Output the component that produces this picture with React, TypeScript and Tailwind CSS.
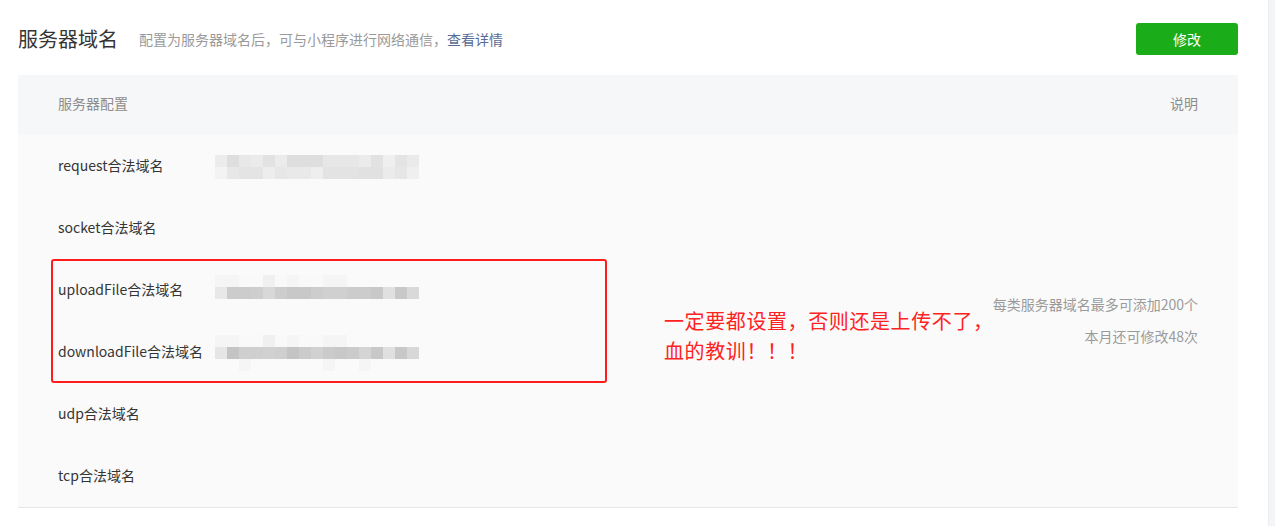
const rows = ['request合法域名', 'socket合法域名', 'uploadFile合法域名', 'downloadFile合法域名', 'udp合法域名', 'tcp合法域名'];

// mosaic blocks that hide the configured domains
const reqTop = ['bg-[#ececec]', 'bg-[#dedede]', 'bg-[#e8e8e8]', 'bg-[#ebebeb]', 'bg-[#e2e2e2]', 'bg-[#ebebeb]', 'bg-[#dedede]', 'bg-[#dedede]', 'bg-[#dedede]', 'bg-[#e7e7e7]', 'bg-[#e7e7e7]', 'bg-[#e7e7e7]', 'bg-[#ebebeb]', 'bg-[#e2e2e2]', 'bg-[#efefef]', 'bg-[#e4e4e4]', 'bg-[#eaeaea]'];
const reqBot = ['bg-[#f3f3f3]', 'bg-[#e7e7e7]', 'bg-[#e4e4e4]', 'bg-[#e4e4e4]', 'bg-[#ededed]', 'bg-[#e7e7e7]', 'bg-[#e9e9e9]', 'bg-[#e9e9e9]', 'bg-[#eeeeee]', 'bg-[#e3e3e3]', 'bg-[#e3e3e3]', 'bg-[#e3e3e3]', 'bg-[#e1e1e1]', 'bg-[#e1e1e1]', 'bg-[#ebebeb]', 'bg-[#e6e6e6]', 'bg-[#efefef]'];
const faint = ['bg-[#f5f5f5]', 'bg-[#f5f5f5]', 'bg-[#f9f9f9]', 'bg-[#f9f9f9]', 'bg-[#f0f0f0]', 'bg-[#f9f9f9]', 'bg-[#f5f5f5]', 'bg-[#f9f9f9]', 'bg-[#f9f9f9]', 'bg-[#f5f5f5]', 'bg-[#f5f5f5]', 'bg-[#fafafa]', 'bg-[#fafafa]', 'bg-[#fafafa]', 'bg-[#fafafa]', 'bg-[#fafafa]', 'bg-[#fafafa]'];
const upMain = ['bg-[#e8e8e8]', 'bg-[#cccccc]', 'bg-[#cccccc]', 'bg-[#cecece]', 'bg-[#d8d8d8]', 'bg-[#cdcdcd]', 'bg-[#c8c8c8]', 'bg-[#c8c8c8]', 'bg-[#cdcdcd]', 'bg-[#d0d0d0]', 'bg-[#d0d0d0]', 'bg-[#cccccc]', 'bg-[#cccccc]', 'bg-[#c8c8c8]', 'bg-[#e0e0e0]', 'bg-[#c8c8c8]', 'bg-[#d9d9d9]'];
const downMain = ['bg-[#e6e6e6]', 'bg-[#c4c4c4]', 'bg-[#cfcfcf]', 'bg-[#cfcfcf]', 'bg-[#d1d1d1]', 'bg-[#cfcfcf]', 'bg-[#c4c4c4]', 'bg-[#cbcbcb]', 'bg-[#d1d1d1]', 'bg-[#cbcbcb]', 'bg-[#c8c8c8]', 'bg-[#cbcbcb]', 'bg-[#d4d4d4]', 'bg-[#c8c8c8]', 'bg-[#e0e0e0]', 'bg-[#c8c8c8]', 'bg-[#d8d8d8]'];
const downBot = ['bg-[#fafafa]', 'bg-[#fafafa]', 'bg-[#f5f5f5]', 'bg-[#fafafa]', 'bg-[#fafafa]', 'bg-[#fafafa]', 'bg-[#fafafa]', 'bg-[#fafafa]', 'bg-[#fafafa]', 'bg-[#f5f5f5]', 'bg-[#fafafa]', 'bg-[#fafafa]', 'bg-[#f5f5f5]', 'bg-[#fafafa]', 'bg-[#fafafa]', 'bg-[#fafafa]', 'bg-[#fafafa]'];

function Strip({ cells }: { cells: string[] }) {
  return (
    <div className="flex">
      {cells.map((c, i) => (
        <div key={i} className={`w-3 h-3 ${c}`} />
      ))}
    </div>
  );
}

function Mosaic({ index }: { index: number }) {
  if (index === 0)
    return (
      <div className="flex flex-col pt-[20px]">
        <Strip cells={reqTop} />
        <Strip cells={reqBot} />
      </div>
    );
  if (index === 2)
    return (
      <div className="flex flex-col pt-[16px]">
        <Strip cells={faint} />
        <Strip cells={upMain} />
      </div>
    );
  if (index === 3)
    return (
      <div className="flex flex-col pt-[14px]">
        <Strip cells={faint} />
        <Strip cells={downMain} />
        <Strip cells={downBot} />
      </div>
    );
  return null;
}

export default function App() {
  return (
    <div
      className="flex w-[1275px] h-[526px] bg-white overflow-hidden"
      style={{ fontFamily: '"Noto Sans CJK SC", "Microsoft YaHei", sans-serif' }}
    >
      <div className="flex-1 pl-[18px] pr-[30px]">
        {/* Header */}
        <div className="flex items-center justify-between pt-[23px] h-[55px]">
          <div className="flex items-center">
            <h2 className="text-[20px] leading-[32px] text-[#353535]">服务器域名</h2>
            <p className="ml-[21px] text-[14px] text-[#9a9a9a]">
              配置为服务器域名后，可与小程序进行网络通信，
              <span className="text-[#576b95]">查看详情</span>
            </p>
          </div>
          <button className="w-[102px] h-[32px] rounded-[3px] bg-[#1aad19] text-white text-[14px]">
            修改
          </button>
        </div>

        {/* Table */}
        <div className="mt-[20px] border-b border-[#e7e7e7]">
          <div className="flex items-center justify-between h-[60px] pb-[3px] px-[40px] bg-[#f6f7f9] text-[14px] text-[#8d8d8d]">
            <span>服务器配置</span>
            <span>说明</span>
          </div>

          <div className="relative flex bg-[#fafafa]">
            <div className="flex flex-col">
              {rows.map((label, i) => (
                <div key={label} className="flex h-[62px] pl-[40px]">
                  <div className="w-[157px] flex items-center pb-[2px] text-[14px] text-[#353535]">{label}</div>
                  <div className="w-[204px]">
                    <Mosaic index={i} />
                  </div>
                </div>
              ))}
            </div>
            <div className="flex-1 flex flex-col items-end justify-center gap-[10px] pr-[40px] pb-[2px] text-[14px] leading-[22px] text-[#9a9a9a]">
              <span>每类服务器域名最多可添加200个</span>
              <span>本月还可修改48次</span>
            </div>

            {/* annotation */}
            <div className="absolute left-[33px] top-[124px] w-[556px] h-[124px] border-[2.5px] border-[#ff1c1c] rounded-[3px]" />
            <div className="absolute left-[646px] top-[171px] text-[20px] leading-[30px] tracking-[0.6px] text-[#ff2222]">
              <div>一定要都设置，否则还是上传不了，</div>
              <div>血的教训！！！</div>
            </div>
          </div>
        </div>
      </div>
      <div className="w-[7px] h-full bg-[#f4f5f7] border-l border-[#eceef1]" />
    </div>
  );
}
